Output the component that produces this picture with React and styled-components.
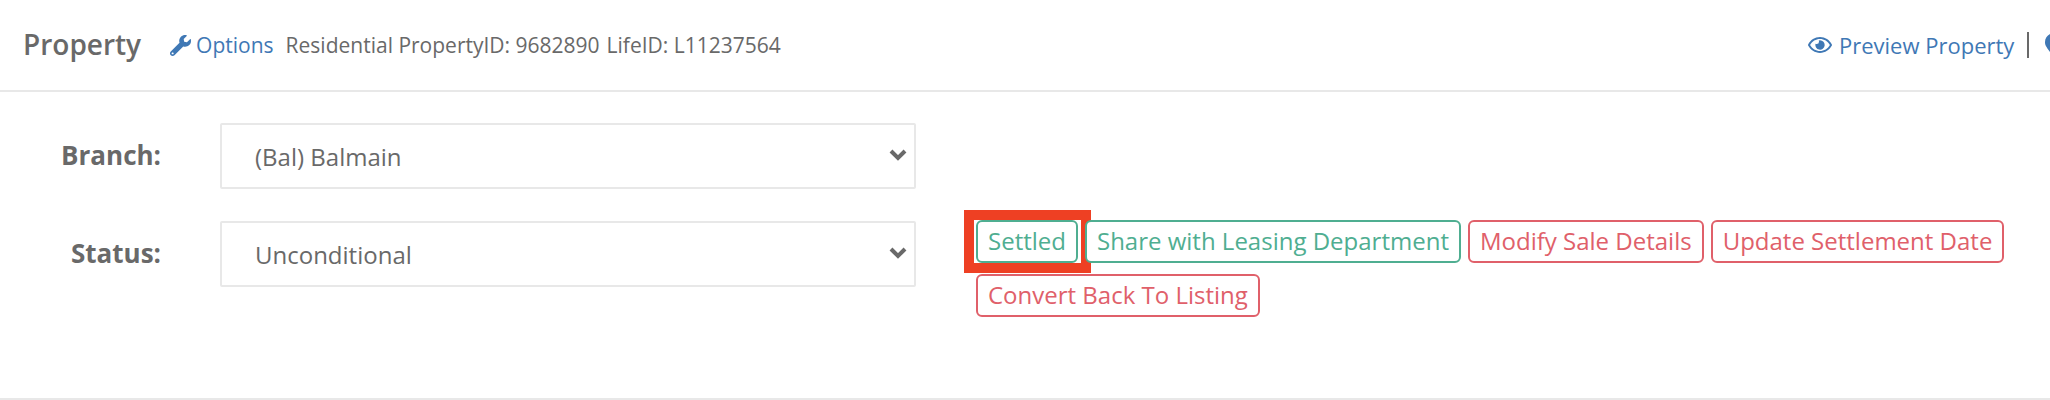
import React from 'react';
import styled, { createGlobalStyle } from 'styled-components';
import { FaWrench, FaRegEye, FaMapMarkerAlt } from 'react-icons/fa';

const GlobalStyle = createGlobalStyle`
  html, body {
    margin: 0;
    padding: 0;
    background: #fff;
    overflow: hidden;
  }
  body {
    font-family: "Open Sans", "Noto Sans", sans-serif;
    color: #696969;
  }
`;

const Page = styled.div`
  width: 2050px;
  height: 400px;
  overflow: hidden;
`;

const Header = styled.div`
  display: flex;
  align-items: center;
  height: 90px;
  padding-left: 23px;
  border-bottom: 2px solid #e8e8e8;
`;

const HeaderLeft = styled.div`
  flex: 1;
  display: flex;
  align-items: center;
`;

const Title = styled.h1`
  margin: 0 29px 3px 0;
  font-size: 28px;
  font-weight: 600;
  color: #696969;
`;

const BlueLink = styled.a`
  display: inline-flex;
  align-items: center;
  color: #3f78b5;
  font-size: ${(p) => p.$size || 21}px;
  text-decoration: none;
`;

const Info = styled.span`
  margin-left: 12px;
  font-size: 21px;
  color: #696969;
`;

const InfoPart = styled.span`
  margin-right: 7px;
`;

const HeaderRight = styled.div`
  flex: 0 0 242px;
  display: flex;
  align-items: center;
  overflow: hidden;
  white-space: nowrap;
`;

const Pipe = styled.span`
  flex: none;
  width: 2px;
  height: 26px;
  margin: 0 13px 0 13px;
  background: #696969;
`;

const Body = styled.div`
  display: flex;
  flex-direction: column;
  gap: 32px;
  padding: 31px 0 81px;
  border-bottom: 2px solid #e8e8e8;
`;

const Row = styled.div`
  display: flex;
  align-items: flex-start;
`;

const Label = styled.div`
  flex: none;
  width: 161px;
  height: 66px;
  line-height: 64px;
  margin-right: 59px;
  text-align: right;
  font-size: 26px;
  font-weight: 700;
  color: #696969;
`;

const SelectBox = styled.div`
  flex: none;
  box-sizing: border-box;
  display: flex;
  align-items: center;
  justify-content: space-between;
  width: 696px;
  height: 66px;
  padding: 0 7px 0 33px;
  border: 2px solid #e8e8e8;
  border-radius: 2px;
  font-size: 24px;
  color: #696969;
`;

const Chevron = styled.svg`
  flex: none;
  width: 18px;
  height: 12px;
  margin-top: -2px;
`;

const Actions = styled.div`
  flex: 1;
  display: flex;
  flex-wrap: wrap;
  gap: 11px 7px;
  margin: -1px 30px 0 60px;
`;

const ActionButton = styled.button`
  position: relative;
  height: 43px;
  padding: 0 10px 2px;
  font-family: inherit;
  font-size: 24px;
  color: ${(p) => (p.$danger ? '#e0606a' : '#4fae91')};
  background: #fff;
  border: 2px solid ${(p) => (p.$danger ? '#e0606a' : '#4fae91')};
  border-radius: 6px;
  white-space: nowrap;
`;

const Highlight = styled.span`
  position: absolute;
  inset: -12px -15px -12px -14px;
  border: 10px solid #ee4023;
  pointer-events: none;
`;

const SelectArrow = () => (
  <Chevron viewBox="0 0 18 12" fill="none" stroke="#696969" strokeWidth="4">
    <path d="M2 2 L9 9 L16 2" />
  </Chevron>
);

const App = () => (
  <Page>
    <GlobalStyle />
    <Header>
      <HeaderLeft>
        <Title>Property</Title>
        <BlueLink href="#">
          <FaWrench size={21} style={{ marginRight: 5 }} />
          Options
        </BlueLink>
        <Info>
          <InfoPart>Residential PropertyID: 9682890</InfoPart>
          LifeID: L11237564
        </Info>
      </HeaderLeft>
      <HeaderRight>
        <BlueLink href="#" $size={22}>
          <FaRegEye size={24} style={{ marginRight: 7 }} />
          Preview Property
        </BlueLink>
        <Pipe />
        <BlueLink href="#">
          <FaMapMarkerAlt size={24} />
        </BlueLink>
      </HeaderRight>
    </Header>
    <Body>
      <Row>
        <Label>Branch:</Label>
        <SelectBox>
          (Bal) Balmain
          <SelectArrow />
        </SelectBox>
      </Row>
      <Row>
        <Label>Status:</Label>
        <SelectBox>
          Unconditional
          <SelectArrow />
        </SelectBox>
        <Actions>
          <ActionButton>
            Settled
            <Highlight />
          </ActionButton>
          <ActionButton>Share with Leasing Department</ActionButton>
          <ActionButton $danger>Modify Sale Details</ActionButton>
          <ActionButton $danger>Update Settlement Date</ActionButton>
          <ActionButton $danger>Convert Back To Listing</ActionButton>
        </Actions>
      </Row>
    </Body>
  </Page>
);

export default App;
